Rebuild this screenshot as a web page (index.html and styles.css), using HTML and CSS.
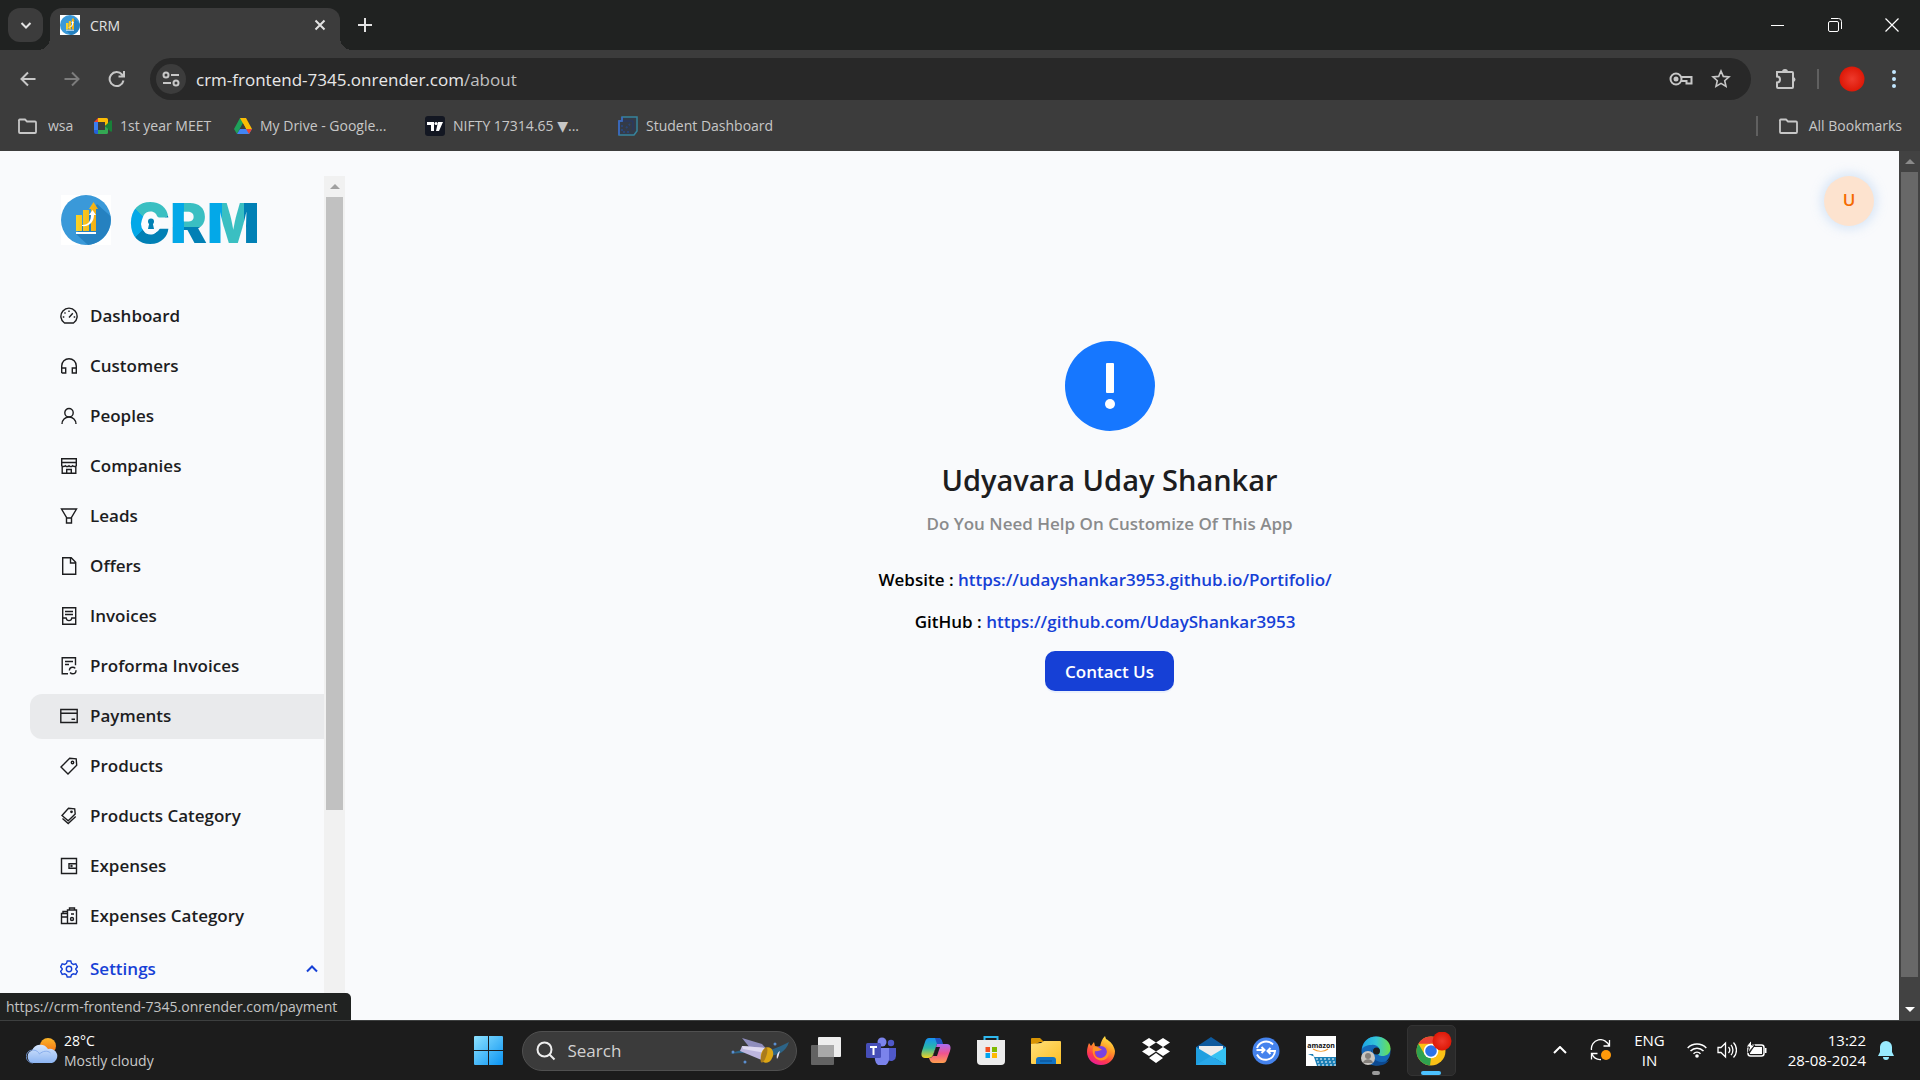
FILE: index.html
```html
<!DOCTYPE html>
<html lang="en">
<head>
<meta charset="utf-8">
<title>CRM</title>
<link rel="stylesheet" href="styles.css">
</head>
<body>
<svg class="defs" aria-hidden="true">
  <defs>
    <symbol id="folder" viewBox="0 0 20 20"><path d="M2 5a1 1 0 0 1 1-1.500h5l2 2h8a1 1 0 0 1 1 1v9.500a1 1 0 0 1-1 1H3a1 1 0 0 1-1-1z" fill="none" stroke="currentColor" stroke-width="1.800"/></symbol>
    <linearGradient id="brandBar" x1="0" x2="1"><stop offset="0" stop-color="#fbd325"/><stop offset="1" stop-color="#f1ab13"/></linearGradient>
    <symbol id="brand" viewBox="0 0 50 50">
      <rect width="50" height="50" fill="#fff"/>
      <circle cx="25" cy="25" r="25" fill="#3a99d9"/>
      <path d="M36 9l13.400 12A25 25 0 0 1 27 49.900L15 39z" fill="#2581c0"/>
      <path d="M15 20h6v16h-6zM22 15h6v21h-6zM30 14h-2l4.500-7L37 14h-2v22h-5z" fill="url(#brandBar)"/>
      <path d="M15 37h20v2H15z" fill="#fff"/>
      <path d="M21 30c7 0 9-5 9-10h-2l3.500-5 3.500 5h-2c0 7-5 12-12 11z" fill="#fff"/>
    </symbol>
    <linearGradient id="win" x1="0" y1="0" x2="1" y2="1"><stop offset="0" stop-color="#8de2ff"/><stop offset="1" stop-color="#0a93f2"/></linearGradient>
    <linearGradient id="yel" x1="0" y1="0" x2="1" y2="1"><stop offset="0" stop-color="#ffe07a"/><stop offset="1" stop-color="#fdbf25"/></linearGradient>
    <linearGradient id="fox" x1=".8" y1="0" x2=".3" y2="1"><stop offset="0" stop-color="#fff04a"/><stop offset=".4" stop-color="#ff9a27"/><stop offset=".75" stop-color="#ff3b4a"/><stop offset="1" stop-color="#e81a9b"/></linearGradient>
    <linearGradient id="edgeTop" x1="0" y1="0" x2="1" y2="0"><stop offset="0" stop-color="#1ba4e6"/><stop offset=".5" stop-color="#35c5d8"/><stop offset="1" stop-color="#6ae04c"/></linearGradient>
    <linearGradient id="copA" x1="0" y1="0" x2="0" y2="1"><stop offset="0" stop-color="#1791f2"/><stop offset=".5" stop-color="#2bb8a5"/><stop offset="1" stop-color="#f4d122"/></linearGradient>
    <linearGradient id="copB" x1="0" y1="0" x2="0" y2="1"><stop offset="0" stop-color="#a96cf5"/><stop offset=".5" stop-color="#f1548e"/><stop offset="1" stop-color="#ff9f4d"/></linearGradient>
    <linearGradient id="cloud" x1="0" y1="0" x2="0" y2="1"><stop offset="0" stop-color="#d6e6fd"/><stop offset="1" stop-color="#8db5f2"/></linearGradient>
    <linearGradient id="sun" x1="0" y1="0" x2="0" y2="1"><stop offset="0" stop-color="#fbb529"/><stop offset="1" stop-color="#f26b12"/></linearGradient>
    <radialGradient id="redDot"><stop offset="0" stop-color="#ee3a2c"/><stop offset="1" stop-color="#dd1807"/></radialGradient>
  </defs>
</svg>

<header class="browser">
  <div class="tabstrip">
    <button class="tab-search" aria-label="Search tabs"><svg width="14" height="14" viewBox="0 0 14 14"><path d="M2.500 5L7 9.500 11.500 5" class="ln2"/></svg></button>
    <div class="tab">
      <svg width="20" height="20"><use href="#brand"/></svg>
      <span class="tab-title">CRM</span>
      <button class="bare" aria-label="Close tab"><svg width="12" height="12" viewBox="0 0 12 12"><path d="M1.500 1.500l9 9m0-9l-9 9" class="ln2"/></svg></button>
    </div>
    <button class="bare new-tab" aria-label="New tab"><svg width="14" height="14" viewBox="0 0 14 14"><path d="M7 0v14M0 7h14" class="ln2"/></svg></button>
    <div class="window-controls">
      <button class="bare" aria-label="Minimize"><svg width="14" height="14" viewBox="0 0 14 14"><path d="M0 7.500h13" stroke="#fff"/></svg></button>
      <button class="bare" aria-label="Restore"><svg width="14" height="14" viewBox="0 0 14 14"><g fill="none" stroke="#fff"><rect x=".5" y="3.500" width="10" height="10" rx="1.500"/><path d="M3 .5h7.500a3 3 0 0 1 3 3V11"/></g></svg></button>
      <button class="bare" aria-label="Close"><svg width="14" height="14" viewBox="0 0 14 14"><path d="M.5.500l13 13m0-13l-13 13" stroke="#fff" stroke-width="1.200"/></svg></button>
    </div>
  </div>

  <div class="toolbar">
    <div class="nav-buttons">
      <button class="bare" aria-label="Back"><svg width="16" height="16" viewBox="0 0 16 16"><path d="M15.500 8H1.500M8 1.500L1.500 8 8 14.500" class="ln2"/></svg></button>
      <button class="bare dim" aria-label="Forward"><svg width="16" height="16" viewBox="0 0 16 16"><path d="M.5 8h14M8 1.500L14.500 8 8 14.500" class="ln2"/></svg></button>
      <button class="bare" aria-label="Reload"><svg width="18" height="18" viewBox="0 0 18 18"><path d="M15.500 10.500a7 7 0 1 1-1.500-6l2 2M16 1v5.500h-5.500" class="ln2"/></svg></button>
    </div>
    <div class="omnibox">
      <button class="site-info" aria-label="Site information"><svg width="18" height="16" viewBox="0 0 18 16"><path d="M9 4h8M1 12h8" class="ln2"/><circle cx="4" cy="4" r="2.500" class="ln2"/><circle cx="14" cy="12" r="2.500" class="ln2"/></svg></button>
      <span class="url">crm-frontend-7345.onrender.com<span class="path">/about</span></span>
      <button class="bare key" aria-label="Passwords"><svg width="24" height="16" viewBox="0 0 24 16"><circle cx="7" cy="8" r="5.500" class="ln2"/><circle cx="7" cy="8" r="2.500" fill="currentColor"/><path d="M12 6h10.500v6.500h-5V10H12" class="ln2"/></svg></button>
      <button class="bare" aria-label="Bookmark"><svg width="20" height="20" viewBox="0 0 20 20"><path d="M10 2l2.300 5.400 5.700.5-4.300 3.800 1.300 5.700-5-3-5 3 1.300-5.700L2 7.900l5.700-.5z" class="ln"/></svg></button>
    </div>
    <div class="tools">
      <button class="bare" aria-label="Extensions"><svg width="22" height="22" viewBox="0 0 22 22"><path d="M2 4h15a1 1 0 0 1 1 1v14a1 1 0 0 1-1 1H3a1 1 0 0 1-1-1v-4.500c4 0 4-6 0-6z" class="ln2"/><path d="M7 4a3 3 0 0 1 6 0zM18 9a2.500 2.500 0 0 1 0 5z" fill="currentColor"/></svg></button>
      <i class="divider"></i>
      <button class="bare" aria-label="Profile"><svg width="26" height="26" viewBox="0 0 26 26"><circle cx="13" cy="13" r="12.500" fill="url(#redDot)"/></svg></button>
      <button class="bare more" aria-label="Menu"><svg width="4" height="18" viewBox="0 0 4 18" fill="#c2e7ff"><circle cx="2" cy="2" r="2"/><circle cx="2" cy="9" r="2"/><circle cx="2" cy="16" r="2"/></svg></button>
    </div>
  </div>

  <nav class="bookmarks" aria-label="Bookmarks">
    <a href="#"><svg width="20" height="20"><use href="#folder"/></svg>wsa</a>
    <a href="#"><svg width="18" height="18" viewBox="0 0 18 18"><path d="M0 5l4-4v4z" fill="#ea4335"/><path d="M0 5h4v8H0z" fill="#3b7cf0"/><path d="M0 13h4v4H2a2 2 0 0 1-2-2z" fill="#2460d8"/><path d="M4 1h8.500a1.500 1.500 0 0 1 1.500 1.500V7l-3 2V5H4z" fill="#fbbc04"/><path d="M4 13h7V9l3 2v4.500a1.500 1.500 0 0 1-1.500 1.500H4z" fill="#34a853"/><path d="M11 9l5.500-5.500c.7-.5 1.500-.2 1.500.6v10c0 .8-.8 1-1.500.5z" fill="#188038"/></svg>1st year MEET</a>
    <a href="#"><svg width="18" height="18" viewBox="0 0 18 18"><path d="M6 1h6l-3 5-6 11-3-5z" fill="#1ea15a"/><path d="M6 1h6l6 11h-6z" fill="#fbbc04"/><path d="M3 17l3-5h12l-3 5z" fill="#4285f4"/><path d="M9 6.500L6 12h6z" fill="#3c3c3c"/><path d="M15 17l-3-5h6z" fill="#ea4335"/></svg>My Drive - Google...</a>
    <a href="#"><svg width="20" height="20" viewBox="0 0 20 20"><rect width="20" height="20" rx="3" fill="#131722"/><path d="M2 6h7v9H6V9H2zM13 6h5l-4 9h-3z" fill="#fff"/><circle cx="11" cy="7.500" r="1.500" fill="#fff"/></svg><span>NIFTY 17314.65 <span class="down">▼</span>...</span></a>
    <a href="#"><svg width="20" height="20" viewBox="0 0 20 20"><path d="M4 1h15v14l-3 4H1V5h3z" fill="#343b48" stroke="#36849c" stroke-width="1.500"/><path d="M4 1v4H1v14" fill="none" stroke="#3b64c8" stroke-width="1.500"/><path d="M5 5h10v9" fill="none" stroke="#27386a"/><path d="M4 9v7h8M8 12l4-4" fill="none" stroke="#2a4576" stroke-width="2" stroke-dasharray="2 2"/></svg>Student Dashboard</a>
    <span class="all"><i class="divider"></i><a href="#"><svg width="20" height="20"><use href="#folder"/></svg>All Bookmarks</a></span>
  </nav>
</header>

<div class="page">
  <aside class="sidebar">
    <div class="side-content">
      <a class="brand" href="#" aria-label="Home">
        <svg width="50" height="50"><use href="#brand"/></svg>
        <span class="wordmark"><span class="w-c">C<svg class="keyhole" viewBox="0 0 20 20" aria-hidden="true"><circle cx="10" cy="10" r="10" fill="#fafbfe"/><circle cx="10" cy="7.500" r="3" fill="#0180b5"/><path d="M8.500 8h3l1.500 7H7z" fill="#0180b5"/></svg></span><span class="w-r">R</span><span class="w-m">M</span></span>
      </a>
      <nav class="menu" aria-label="Main">
        <a href="#"><svg viewBox="0 0 18 18"><path d="M4.500 16a8.100 8.100 0 1 1 9 0z"/><path d="M9 10.500l3.800-4.200M9 3.500v1.500M4.500 5.500l1 1M2.800 10h1.500M13.700 10h1.500"/></svg>Dashboard</a>
        <a href="#"><svg viewBox="0 0 18 18"><path d="M1.700 16V9a7.300 7.300 0 0 1 14.600 0v7h-4v-5h4M1.700 11h4v5h-4"/></svg>Customers</a>
        <a href="#"><svg viewBox="0 0 18 18"><circle cx="9" cy="5.700" r="4.200"/><path d="M2 17a7 7 0 0 1 14 0"/></svg>Peoples</a>
        <a href="#"><svg viewBox="0 0 18 18"><path d="M1.700 1.700h14.600v3.800H1.700zM1.700 5.500v3.200c1 1 2.600 1 3.600 0 1 1 2.700 1 3.700 0 1 1 2.700 1 3.700 0 1 1 2.600 1 3.600 0V5.500M2.200 9.500v6.800h13.600V9.500M6.700 16v-3.500h4.600V16"/></svg>Companies</a>
        <a href="#"><svg viewBox="0 0 18 18"><path d="M1.500 2h15l-5 8.500V16h-5v-5.500zM6.500 11h5"/></svg>Leads</a>
        <a href="#"><svg viewBox="0 0 18 18"><path d="M2.700.8h8.500l4.500 4.500v11.900h-13zM10.500 1v5h5"/></svg>Offers</a>
        <a href="#"><svg viewBox="0 0 18 18"><path d="M2.700.8h13v16.400h-13zM5 4.500h8M5 7.500h8M2.700 11h3.500c.5 3.500 5.100 3.500 5.600 0h3.700"/></svg>Invoices</a>
        <a href="#"><svg viewBox="0 0 18 18"><path d="M8 16.700H2.200V.8h13.300v7.500M5 4.500h8M5 7.500h4"/><circle cx="12.700" cy="13.500" r="3.300" stroke-dasharray="8 2"/></svg>Proforma Invoices</a>
        <a href="#" class="hover"><svg viewBox="0 0 18 18"><path d="M.8 2.500h16.400v13H.8zM.8 6.300h16.400M11.500 12.200h3.500"/></svg>Payments</a>
        <a href="#"><svg viewBox="0 0 18 18"><path d="M1 10l8.700-8.700 6.500.5.500 6.500L8 16.900z"/><circle cx="12.500" cy="5.500" r="1.200"/></svg>Products</a>
        <a href="#"><svg viewBox="0 0 18 18"><path d="M2 8.500l6.500-7.300 6.200.6.500 5.200-7 6.700zM2.500 11.500l5.700 5 7.500-7"/><circle cx="11.500" cy="4.800" r=".7"/></svg>Products Category</a>
        <a href="#"><svg viewBox="0 0 18 18"><path d="M1.500 1.500h15v15h-15zM16.500 6.700H9v4.600h7.500"/><circle cx="11.500" cy="9" r=".5"/></svg>Expenses</a>
        <a href="#"><svg viewBox="0 0 18 18"><path d="M7.500 6V3h9v13.500h-9M1.500 6.500h6v10h-6zM3 6.500V4.500h4.500M1.500 10h6M9.500 3V1h5v2M11 7h3"/><circle cx="12" cy="12" r="1.500"/></svg>Expenses Category</a>
        <a href="#" class="open"><svg viewBox="0 0 18 18"><path d="M7.200 1h3.600l.7 2.400 1.800 1 2.500-.6 1.600 3-1.600 2v.6l1.600 2-1.600 3-2.500-.6-1.800 1-.7 2.200H7.200l-.7-2.200-1.800-1-2.500.6-1.600-3 1.600-2v-.6l-1.600-2 1.600-3 2.500.6 1.800-1z"/><circle cx="9" cy="9" r="2.700"/></svg>Settings<svg class="caret" viewBox="0 0 12 12"><path d="M1 8.500l5-5 5 5"/></svg></a>
      </nav>
    </div>
    <div class="scrollbar light"><svg width="10" height="5" viewBox="0 0 10 5"><path d="M0 5l5-5 5 5z" fill="#a0a0a0"/></svg><div class="thumb"></div></div>
  </aside>

  <main class="content">
    <div class="topbar"><button class="avatar">U</button></div>
    <section class="result">
      <svg width="90" height="90" viewBox="0 0 90 90" aria-hidden="true"><circle cx="45" cy="45" r="45" fill="#1677ff"/><rect x="41" y="22" width="8" height="30" rx="1" fill="#fff"/><circle cx="45" cy="63" r="5" fill="#fff"/></svg>
      <h1>Udyavara Uday Shankar</h1>
      <p class="subtitle">Do You Need Help On Customize Of This App</p>
      <p class="line">Website : <a href="#">https://udayshankar3953.github.io/Portifolio/</a>&nbsp;&nbsp;</p>
      <p class="line">GitHub : <a href="#">https://github.com/UdayShankar3953</a>&nbsp;&nbsp;</p>
      <button class="primary">Contact Us</button>
    </section>
  </main>
  <div class="scrollbar dark"><svg width="10" height="5" viewBox="0 0 10 5"><path d="M0 5l5-5 5 5z" fill="#8a8a8a"/></svg><div class="thumb"></div><svg width="10" height="5" viewBox="0 0 10 5"><path d="M0 0l5 5 5-5z" fill="#fff"/></svg></div>
  <div class="status">https://crm-frontend-7345.onrender.com/payment</div>
</div>

<footer class="taskbar">
  <button class="weather">
    <svg width="32" height="26" viewBox="0 0 32 26"><circle cx="22" cy="8" r="8" fill="url(#sun)"/><path d="M7 25a6.500 6.500 0 0 1-1-12.500A9 9 0 0 1 22 11a7 7 0 1 1 4 14z" fill="url(#cloud)"/><path d="M7 25a6.500 6.500 0 0 1-.5-13c4 0 6 2 7 4 3-3 8-4 11-1" fill="none" stroke="#7ea6ea" stroke-width=".8"/></svg>
    <span><span class="temp">28°C</span><br>Mostly cloudy</span>
  </button>

  <div class="apps">
    <button class="app" aria-label="Start"><svg width="30" height="30" viewBox="0 0 30 30"><path d="M0 1a1 1 0 0 1 1-1h13v14H0zM15 0h13a1 1 0 0 1 1 1v13H15zM0 15h14v14H1a1 1 0 0 1-1-1zM15 15h14v13a1 1 0 0 1-1 1H15z" fill="url(#win)"/></svg></button>
    <label class="search">
      <svg width="20" height="20" viewBox="0 0 20 20"><circle cx="8.500" cy="8.500" r="7" fill="none" stroke="#eee" stroke-width="2"/><path d="M13.500 13.500l5 5" stroke="#eee" stroke-width="2"/></svg>
      <input type="text" placeholder="Search" aria-label="Search">
      <svg width="60" height="28" viewBox="0 0 60 28"><path d="M0 17c14-6 22-6 30-4s20-3 29-8c-4 12-14 15-26 13S14 15 0 17z" fill="#2d6487"/><path d="M12 1l20 6 8 9-20-5z" fill="#8f8dbd"/><path d="M12 9l24 2-2 13-24-10z" fill="#bdb6de"/><path d="M12 9l24 2-1 5-22-4z" fill="#ded9f0"/><ellipse cx="37" cy="18" rx="6" ry="8" transform="rotate(18 37 18)" fill="#dca514"/><ellipse cx="34" cy="18" rx="2.500" ry="8" transform="rotate(18 34 18)" fill="#a97b1c"/><path d="M47 22c-1-4 1-7 3-8-1 3-1 5-3 8z" fill="#e7e4f4"/><circle cx="45" cy="7" r="1.500" fill="#5b8fd0"/><circle cx="3" cy="15" r="1.500" fill="#5b8fd0"/><circle cx="15" cy="25" r="1.500" fill="#5b8fd0"/></svg>
    </label>
    <button class="app" aria-label="Task view"><svg width="30" height="28" viewBox="0 0 30 28"><rect y="8" width="23" height="20" rx="1" fill="#636363"/><rect x="7" width="23" height="20" rx="1" fill="#eee"/><rect x="7" y="8" width="16" height="12" fill="#a9a9a9"/></svg></button>
    <button class="app" aria-label="Teams"><svg width="30" height="28" viewBox="0 0 30 28"><circle cx="16" cy="5" r="4.500" fill="#7b83eb"/><circle cx="25" cy="6" r="3.200" fill="#5059c9"/><path d="M21 11h9v8a5 5 0 0 1-8 4z" fill="#5059c9"/><path d="M8 11h15v10a7 7 0 0 1-14 2z" fill="#7b83eb"/><rect y="6" width="15" height="15" rx="1.500" fill="#464eb8"/><path d="M4 10h7M7.500 10v8" stroke="#fff" stroke-width="2"/></svg></button>
    <button class="app" aria-label="Copilot"><svg width="30" height="28" viewBox="0 0 30 28"><path d="M8 1h9c3 0 4 2 4 6h-5l-4 11c-1 2-2 3-5 3H4c-4 0-4-4-3-7L4 5c1-3 2-4 4-4z" fill="url(#copA)"/><path d="M22 26h-9c-3 0-4-2-5-5 3 0 4-2 5-5l3-9h10c4 0 4 4 3 7l-3 8c-1 3-2 4-4 4z" fill="url(#copB)"/><path d="M14 1h3c3 0 4 2 5 6h-6z" fill="#2054c4"/><path d="M15 10h4l-3 9h-4z" fill="#1c1c1c"/></svg></button>
    <button class="app" aria-label="Store"><svg width="28" height="30" viewBox="0 0 28 30"><path d="M7.500 6V1h13v5" fill="none" stroke="#2fb9ef" stroke-width="2"/><path d="M0 4h28v21a4 4 0 0 1-4 4H4a4 4 0 0 1-4-4z" fill="#ececec"/><path d="M8.500 11H13v5H8.500z" fill="#f25022"/><path d="M15 11h5v5h-5z" fill="#7fba00"/><path d="M8.500 17H13v5H8.500z" fill="#00a4ef"/><path d="M15 17h5v5h-5z" fill="#ffb900"/></svg></button>
    <button class="app" aria-label="File Explorer"><svg width="30" height="28" viewBox="0 0 30 28"><path d="M0 2a1 1 0 0 1 1-1h8l4 4h-4L0 9z" fill="#d89404"/><path d="M0 7l10-1 3-2h16a1 1 0 0 1 1 1v22H1a1 1 0 0 1-1-1z" fill="url(#yel)"/><path d="M5 27v-4a3 3 0 0 1 3-3h14a3 3 0 0 1 3 3v4z" fill="#1273c4"/><path d="M9 24h12" stroke="#0a4d8c"/></svg></button>
    <button class="app" aria-label="Firefox"><svg width="30" height="30" viewBox="0 0 30 30"><path d="M3 7l2 3 3-4 1 4 5 1c1-5 2-8 5-11l1 3c4 2 8 6 9 12 0 8-6 14-14 14S1 23 1 16c0-4 1-6 2-9z" fill="url(#fox)"/><circle cx="15" cy="16" r="6" fill="#7a42e2"/><path d="M7 11c3-1 6 0 9 3-3 0-4 2-7 1-2 4 2 8 7 7 6-2 6-8 3-12 6 4 5 12-1 14-6 2-13-3-11-13z" fill="#ff9225"/></svg></button>
    <button class="app" aria-label="Dropbox"><svg width="30" height="28" viewBox="0 0 30 28"><path d="M8 1l7 4.500-7 4.500-7-4.500zM22 1l7 4.500-7 4.500-7-4.500zM8 10l7 4.500L8 19l-7-4.500zM22 10l7 4.500-7 4.500-7-4.500zM15 16l7 5-7 5-7-5z" fill="#fff"/></svg></button>
    <button class="app" aria-label="Mail"><svg width="30" height="30" viewBox="0 0 30 30"><path d="M0 11L15 1l15 10v5H0z" fill="#0d5a9e"/><path d="M3 10h24v8l-12 5L3 17z" fill="#ececec"/><path d="M0 11l30 18H0z" fill="#1f9fe0"/><path d="M30 11v18L15 20z" fill="#35c2f3"/><path d="M0 29l15-9 15 9z" fill="#28a8ea"/></svg></button>
    <button class="app" aria-label="Sync"><svg width="28" height="28" viewBox="0 0 28 28"><circle cx="14" cy="14" r="13.500" fill="#4583ed"/><g fill="none" stroke="#fff" stroke-width="2"><path d="M21 7.500A9.500 9.500 0 0 0 5 11M5 17.500a9.500 9.500 0 0 0 18-3.500h-7M4.500 13H12"/><path d="M9.500 10l3 3-3 3M18.500 11l-3 3 3 3"/></g></svg></button>
    <button class="app" aria-label="Amazon"><svg width="30" height="30" viewBox="0 0 30 30"><rect width="30" height="30" fill="#fff"/><text x="15" y="12" text-anchor="middle" class="amazon">amazon</text><path d="M7 13c5 3 11 3 15 0" fill="none" stroke="#f29a2e" stroke-width="1.200"/><path d="M2 18h5l4 12h19v-9H9" fill="#1b7fb5"/><path d="M10 23h20M11 26h19M12 29h18" stroke="#fff" stroke-dasharray="2 2"/></svg></button>
    <button class="app running" aria-label="Edge"><svg width="30" height="30" viewBox="0 0 30 30"><circle cx="15" cy="15" r="14.500" fill="#1468ba"/><path d="M1 13C2 5 8 .5 15 .5c9 0 14.500 6 14.500 12 0 5-4 7.500-8 7.500-3 0-5-1-4-3 3-5-2-9-7-8-5 0-8 2-9.500 4z" fill="url(#edgeTop)"/><path d="M12 12c-3 7 1 14 9 14 3 0 5-1 7-2-3 5-9 6-13 5.500C9 29 6 20 12 12z" fill="#0d4a91"/><circle cx="15.500" cy="15" r="3.500" fill="#1c1c1c"/><circle cx="7" cy="22" r="7" fill="#c9c6c2"/><circle cx="7" cy="20" r="3" fill="#85807b"/><path d="M2 27c1-5 9-5 10 0z" fill="#85807b"/></svg></button>
    <button class="app active" aria-label="Chrome"><svg width="36" height="34" viewBox="0 0 36 34"><circle cx="15" cy="19" r="14.500" fill="#fbc116"/><path d="M2.400 11.800A14.500 14.500 0 0 1 27.600 11.800H15z" fill="#ea4335"/><path d="M2.400 11.800L8.700 22.600 15 26l-1 7.500A14.500 14.500 0 0 1 2.400 11.800z" fill="#2fa24f"/><path d="M15 11.800h12.600L21 23z" fill="#fbc116"/><circle cx="15" cy="19" r="7.300" fill="#fff"/><circle cx="15" cy="19" r="5.800" fill="#2c72e8"/><circle cx="26" cy="9" r="9.500" fill="url(#redDot)"/></svg></button>
  </div>

  <div class="tray">
    <button class="bare" aria-label="Show hidden icons"><svg width="14" height="8" viewBox="0 0 14 8"><path d="M1 7l6-6 6 6" fill="none" stroke="#fff" stroke-width="2"/></svg></button>
    <button class="bare update" aria-label="Update"><svg width="22" height="22" viewBox="0 0 22 22"><g fill="none" stroke="#fff" stroke-width="1.300"><path d="M1.500 11A9 9 0 0 1 19 7M19.500 1v6h-6M11 20.500A9 9 0 0 1 2 15M1.500 20.500v-6h6"/></g><circle cx="16" cy="16" r="5" fill="#ff9a0a"/></svg></button>
    <button class="lang">ENG<br>IN</button>
    <button class="quick" aria-label="Network, volume, battery">
      <svg width="20" height="16" viewBox="0 0 20 16"><g fill="none" stroke="#fff" stroke-width="1.500"><path d="M.7 6a13 13 0 0 1 18.600 0M3.500 9a9 9 0 0 1 13 0M6.500 11.700a5 5 0 0 1 7 0"/></g><circle cx="10" cy="14" r="1.800" fill="#fff"/></svg>
      <svg width="20" height="18" viewBox="0 0 20 18"><path d="M1 6.500h3L8.500 2v14L4 11.500H1zM11.500 6a4.500 4.500 0 0 1 0 6M14 3.800a8 8 0 0 1 0 10.400M16.500 1.500a11 11 0 0 1 0 15" fill="none" stroke="#fff" stroke-width="1.300"/></svg>
      <svg width="20" height="18" viewBox="0 0 20 18"><rect x="1" y="4" width="16" height="11" rx="2.500" fill="none" stroke="#fff" stroke-width="1.500"/><path d="M3 12l4-6h8v7H3zM18 7h1.500v5H18z" fill="#fff"/><path d="M4.500-1L-1 6h3.500L1 12l7-8H4.500z" fill="#fff" stroke="#1c1c1c"/></svg>
    </button>
    <button class="clock">13:22<br>28-08-2024</button>
    <button class="bare bell" aria-label="Notifications"><svg width="16" height="20" viewBox="0 0 16 20"><path d="M8 1a6 6 0 0 1 6 6v5l2 4H0l2-4V7a6 6 0 0 1 6-6zM5 17h6a3 3 0 0 1-6 0z" fill="#99ebff"/></svg></button>
  </div>
</footer>
</body>
</html>
```
FILE: styles.css
```css
* { box-sizing: border-box; }

body {
  margin: 0;
  height: 100vh;
  display: flex;
  flex-direction: column;
  overflow: hidden;
  font-family: "Open Sans", "Noto Sans", sans-serif;
  font-size: 14px;
  background: #f9fafc;
}

.defs { position: absolute; width: 0; height: 0; }
svg { flex: none; display: block; }
a { color: inherit; text-decoration: none; }
button { font: inherit; color: inherit; border: 0; background: none; padding: 0; }
.bare { display: flex; align-items: center; justify-content: center; }
.ln { fill: none; stroke: currentColor; stroke-width: 1.600; }
.ln2 { fill: none; stroke: currentColor; stroke-width: 2; }

/* Browser frame */
.browser { background: #3c3c3c; color: #c7c7c7; flex: none; }
.tabstrip { height: 50px; display: flex; align-items: flex-end; background: #202221; padding-left: 8px; }
.tab-search {
  width: 35px; height: 34px; margin-bottom: 8px; border-radius: 12px;
  display: flex; align-items: center; justify-content: center;
  background: #3c3c3c; color: #e3e3e3;
}
.tab {
  position: relative;
  width: 290px; height: 42px; margin-left: 7px; padding: 0 14px 8px 10px;
  display: flex; align-items: center; gap: 10px;
  border-radius: 12px 12px 0 0;
  background: #3c3c3c; color: #e3e3e3;
}
.tab::before, .tab::after { content: ""; position: absolute; bottom: 0; width: 12px; height: 12px; }
.tab::before { left: -12px; background: radial-gradient(circle at 0 0, transparent 12px, #3c3c3c 12px); }
.tab::after { right: -12px; background: radial-gradient(circle at 100% 0, transparent 12px, #3c3c3c 12px); }
.tab-title { flex: 1; }
.new-tab { height: 34px; width: 34px; margin: 0 0 8px 8px; color: #e3e3e3; }
.window-controls { margin-left: auto; display: flex; height: 50px; }
.window-controls .bare { width: 57px; }

.toolbar { height: 58px; padding: 0 24px 0 20px; display: flex; align-items: center; }
.nav-buttons { width: 130px; display: flex; align-items: center; gap: 28px; }
.dim { color: #7c7c7c; }
.omnibox {
  flex: 1; height: 42px; padding: 0 20px 0 6px;
  display: flex; align-items: center;
  border-radius: 21px; background: #282828;
}
.site-info {
  width: 30px; height: 30px; margin-right: 10px; border-radius: 50%;
  display: flex; align-items: center; justify-content: center; background: #3c3c3c;
}
.url { flex: 1; font-size: 17px; color: #e8e8e8; }
.path { color: #c0c0c0; }
.key { margin-right: 18px; }
.tools { display: flex; align-items: center; padding-left: 24px; gap: 20px; }
.more { margin-left: 7px; }
.divider { width: 2px; height: 20px; background: #606060; }

.bookmarks {
  height: 43px; padding: 0 18px 8px 17px;
  display: grid; grid-template-columns: 77px 140px 191px 193px 1fr auto; align-items: center;
}
.bookmarks a { display: flex; align-items: center; gap: 8px; white-space: nowrap; }
.bookmarks a:first-child, .all a { gap: 11px; }
.all { display: flex; align-items: center; gap: 20px; }
.down { font: 14px/1 "DejaVu Sans", sans-serif; }

/* Application page */
.page { flex: 1; min-height: 0; display: flex; position: relative; background: #f9fafc; }
.sidebar { width: 345px; display: flex; padding-top: 25px; }
.side-content { flex: 1; overflow: hidden; padding: 19px 0 0 30px; }
.brand { display: flex; align-items: center; gap: 18px; padding-left: 31px; }
.wordmark { font: 900 55px/50px "Inter", sans-serif; height: 50px; padding-top: 3px; display: flex; }
.wordmark > span { height: 50px; -webkit-background-clip: text; background-clip: text; color: transparent; }
.w-c { position: relative; background-image: conic-gradient(from 315deg, #3abfc2 0 115deg, #0180b5 115deg 270deg, #03a8e8 270deg); }
.keyhole { position: absolute; left: 12px; top: 16px; width: 20px; height: 20px; }
.w-r { background-image: linear-gradient(90deg, #03a8e8 37%, transparent 37%), linear-gradient(#3abfc2 58%, #0180b5 58%); }
.w-m { background-image: linear-gradient(90deg, #03a8e8 29%, #3abfc2 29% 71%, #0180b5 71%); }

.menu { display: flex; flex-direction: column; gap: 5px; padding-top: 49px; }
.menu a {
  height: 45px; flex: none; padding: 0 0 2px 30px;
  display: flex; align-items: center; gap: 12px;
  border-radius: 12px 0 0 12px;
  font-size: 17px; font-weight: 600; color: #1d1d1f;
}
.menu svg { width: 18px; height: 18px; fill: none; stroke: currentColor; stroke-width: 1.400; }
.menu .hover { background: #e9eaec; }
.menu .open { color: #1640d6; margin-top: 3px; padding-right: 6px; }
.menu .caret { width: 12px; height: 12px; margin-left: auto; stroke-width: 2; }

.scrollbar { width: 21px; flex: none; display: flex; flex-direction: column; align-items: center; padding: 8px 2px; }
.scrollbar .thumb { width: 100%; margin-top: 8px; }
.light { background: #f1f1f1; }
.light .thumb { height: 74%; background: #c1c1c1; }
.dark { background: #424242; }
.dark .thumb { flex: 1; background: #686868; margin-bottom: 30px; }

.content { flex: 1; min-width: 0; padding: 25px 25px 0 0; }
.topbar { display: flex; justify-content: flex-end; }
.avatar {
  width: 50px; height: 50px; padding-bottom: 3px; border-radius: 50%;
  background: #fde3cf; color: #f56a00; font-size: 17px; font-weight: 600;
  box-shadow: 0 0 12px 2px rgba(150, 190, 238, .4);
}
.result { display: flex; flex-direction: column; align-items: center; padding-top: 115px; }
.result h1 { margin: 29px 0 0; font-size: 29px; line-height: 40px; font-weight: 600; color: #1d1d1f; }
.result p { margin: 0; font-size: 17px; line-height: 28px; font-weight: 600; }
.result .subtitle { margin: 10px 0 28px; color: #8a8b8c; }
.result .line { margin-bottom: 14px; color: #000; }
.line a { color: #1640d6; }
.primary {
  height: 40px; margin-top: 1px; padding: 0 20px; border-radius: 10px;
  background: #1640d6; color: #fff; font-size: 17px; font-weight: 600;
  box-shadow: 0 2px 0 rgba(5, 80, 255, .06);
}

.status {
  position: absolute; left: 0; bottom: 0;
  height: 27px; padding: 0 14px 0 6px; line-height: 27px;
  border-radius: 0 5px 0 0; background: #202221; color: #c4c4c4; font-size: 14px;
}

/* Desktop taskbar */
.taskbar {
  flex: none; height: 60px; padding: 0 26px; border-top: 1px solid #3d3f3f;
  display: grid; grid-template-columns: 1fr auto 1fr; align-items: center;
  background: #1c1c1c; color: #fff;
}
.weather { display: flex; align-items: center; gap: 6px; text-align: left; line-height: 20px; color: #c9c9c9; }
.temp { color: #fff; }
.apps { display: flex; align-items: center; }
.app { width: 55px; height: 59px; display: flex; align-items: center; justify-content: center; position: relative; }
.search {
  width: 275px; height: 40px; margin: 0 2px 0 5px; padding: 0 6px 0 13px;
  display: flex; align-items: center; gap: 12px;
  border: 1px solid #505050; border-radius: 20px; background: #3b3b3b;
}
.search input {
  flex: 1; min-width: 0; padding: 0; border: 0; outline: 0;
  background: none; font: 17px "Open Sans", sans-serif; color: #fff;
}
.search input::placeholder { color: #d2d2d2; opacity: 1; }
.amazon { font: 700 7px "Open Sans", sans-serif; fill: #111; }
.active::before { content: ""; position: absolute; inset: 4px 3px; border: 1px solid #333; border-radius: 5px; background: #292929; }
.active svg { position: relative; left: 3px; top: -2px; }
.running::after, .active::after {
  content: ""; position: absolute; bottom: 5px; width: 8px; height: 4px; border-radius: 2px; background: #9a9a9a;
}
.active::after { width: 20px; background: #4cc2ff; }

.tray { display: flex; align-items: center; justify-content: flex-end; font-size: 15px; line-height: 20px; padding-bottom: 1px; }
.update { margin: 0 22px 0 23px; }
.lang { text-align: center; }
.quick { display: flex; align-items: center; gap: 10px; margin: 0 21px 0 22px; }
.clock { text-align: right; }
.bell { margin-left: 12px; }
```
